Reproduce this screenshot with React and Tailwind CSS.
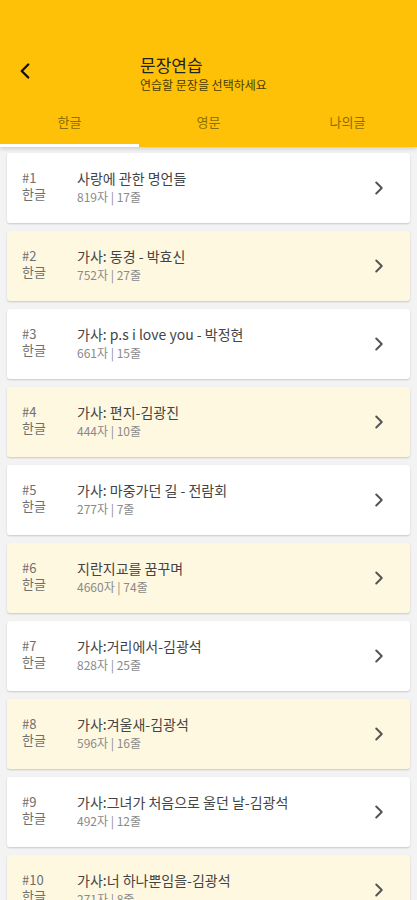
import { ChevronLeft, ChevronRight } from "lucide-react";

const items = [
  { title: "사랑에 관한 명언들", chars: 819, lines: 17 },
  { title: "가사: 동경 - 박효신", chars: 752, lines: 27 },
  { title: "가사: p.s i love you - 박정현", chars: 661, lines: 15 },
  { title: "가사: 편지-김광진", chars: 444, lines: 10 },
  { title: "가사: 마중가던 길 - 전람회", chars: 277, lines: 7 },
  { title: "지란지교를 꿈꾸며", chars: 4660, lines: 74 },
  { title: "가사:거리에서-김광석", chars: 828, lines: 25 },
  { title: "가사:겨울새-김광석", chars: 596, lines: 16 },
  { title: "가사:그녀가 처음으로 울던 날-김광석", chars: 492, lines: 12 },
  { title: "가사:너 하나뿐임을-김광석", chars: 271, lines: 8 },
];

const tabs = ["한글", "영문", "나의글"];

export default function App() {
  return (
    <div
      className="w-[417px] h-[900px] overflow-hidden bg-[#f3f3f3] flex flex-col"
      style={{ fontFamily: '"Noto Sans CJK KR", "Noto Sans", sans-serif' }}
    >
      {/* header */}
      <div className="bg-[#ffc107] shadow-[0_2px_4px_rgba(0,0,0,0.15)] z-10 shrink-0">
        <div className="h-[100px] flex items-end pb-[6px]">
          <div className="w-[140px] pl-[12px] pb-[10px]">
            <ChevronLeft size={26} strokeWidth={2.2} className="text-[#111]" />
          </div>
          <div className="flex flex-col">
            <span className="text-[17px] leading-[22px] text-[#222]">문장연습</span>
            <span className="text-[12px] leading-[18px] text-[#4a3d00]">연습할 문장을 선택하세요</span>
          </div>
        </div>
        <div className="flex h-[47px]">
          {tabs.map((t, i) => (
            <div key={t} className="flex-1 flex flex-col">
              <div className="flex-1 flex items-center justify-center pb-[1px] text-[13px] text-[#8a7000]">
                {t}
              </div>
              <div className={i === 0 ? "h-[3px] bg-white" : "h-[3px]"} />
            </div>
          ))}
        </div>
      </div>

      {/* list */}
      <div className="flex flex-col gap-[8px] px-[7px] pt-[6px]">
        {items.map((it, i) => (
          <div
            key={i}
            className={
              (i % 2 === 0 ? "bg-white" : "bg-[#fff8e1]") +
              " h-[70px] shrink-0 rounded-[3px] shadow-[0_1px_2px_rgba(0,0,0,0.18)] flex items-center"
            }
          >
            <div className="w-[70px] pl-[15px] pb-[4px] flex flex-col text-[13px] leading-[16px] text-[#6f6f6f]">
              <span>#{i + 1}</span>
              <span>한글</span>
            </div>
            <div className="flex-1 flex flex-col pb-[2px]">
              <span className="text-[14px] leading-[20px] text-[#444]">{it.title}</span>
              <span className="text-[12px] leading-[18px] text-[#8a8a8a]">
                {it.chars}자 | {it.lines}줄
              </span>
            </div>
            <div className="pr-[20px]">
              <ChevronRight size={22} strokeWidth={2.2} className="text-[#555]" />
            </div>
          </div>
        ))}
      </div>
    </div>
  );
}
